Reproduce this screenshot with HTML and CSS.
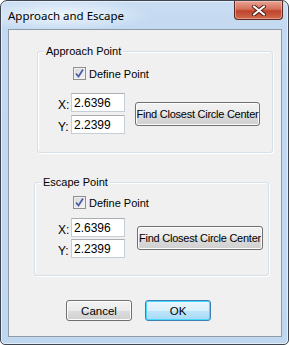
FILE: index.html
```html
<!DOCTYPE html>
<html lang="en">
<head>
    <meta charset="UTF-8">
    <title>Approach and Escape</title>
    <link rel="stylesheet" href="styles.css">
</head>
<body>
    <div class="window">
        <!-- Title bar -->
        <div class="titlebar">
            <span class="title">Approach and Escape</span>
            <div class="close">
                <svg width="16" height="11" viewBox="0 0 16 11">
                    <path d="M3 1.5 L13 9.5 M13 1.5 L3 9.5" stroke="#4a1a14" stroke-width="4" stroke-linecap="round"/>
                    <path d="M3 1.5 L13 9.5 M13 1.5 L3 9.5" stroke="#fff" stroke-width="2.2" stroke-linecap="round"/>
                </svg>
            </div>
        </div>

        <div class="client">
            <!-- Approach group -->
            <div class="group g1">
                <span class="legend">Approach Point</span>
                <label class="chk-row">
                    <span class="chk">
                        <svg width="9" height="9" viewBox="0 0 9 9"><path d="M1 4.5 L3.5 7.5 L8 0.5" fill="none" stroke="#4a5fa8" stroke-width="1.8"/></svg>
                    </span>
                    Define Point
                </label>
                <div class="coords">
                    <div class="fields">
                        <div class="fld"><span class="lbl">X:</span><span class="tb">2.6396</span></div>
                        <div class="fld"><span class="lbl">Y:</span><span class="tb">2.2399</span></div>
                    </div>
                    <button class="btn find">Find Closest Circle Center</button>
                </div>
            </div>

            <!-- Escape group -->
            <div class="group g2">
                <span class="legend">Escape Point</span>
                <label class="chk-row">
                    <span class="chk">
                        <svg width="9" height="9" viewBox="0 0 9 9"><path d="M1 4.5 L3.5 7.5 L8 0.5" fill="none" stroke="#4a5fa8" stroke-width="1.8"/></svg>
                    </span>
                    Define Point
                </label>
                <div class="coords">
                    <div class="fields">
                        <div class="fld"><span class="lbl">X:</span><span class="tb">2.6396</span></div>
                        <div class="fld"><span class="lbl">Y:</span><span class="tb">2.2399</span></div>
                    </div>
                    <button class="btn find">Find Closest Circle Center</button>
                </div>
            </div>

            <div class="actions">
                <button class="btn">Cancel</button>
                <button class="btn ok">OK</button>
            </div>
        </div>
    </div>
</body>
</html>
```

FILE: styles.css
```css
body {
    margin: 0;
    padding: 0;
    background-color: #fff;
    font-family: "Liberation Sans", Arial, sans-serif;
    font-size: 11px;
    color: #000;
}
.window {
    box-sizing: border-box;
    width: 289px;
    height: 345px;
    border: 1px solid #3f4650;
    border-radius: 7px 7px 5px 5px;
    background: linear-gradient(to bottom, #c9ddf2 0, #c3d9f1 30px, #c0d7f0 100%);
    box-shadow: inset 0 0 0 1px #e4eef9;
    padding: 0 6px 7px 7px;
    display: flex;
    flex-direction: column;
}
.titlebar {
    height: 28px;
    display: flex;
    align-items: flex-start;
    justify-content: space-between;
    background: radial-gradient(ellipse 90px 16px at 60px 14px, rgba(240, 247, 253, 0.95), rgba(240, 247, 253, 0) 100%);
    margin: 0 -6px 0 -7px;
    padding: 0 5px 0 7px;
}
.title {
    font-family: "Noto Sans", "Open Sans", sans-serif;
    font-size: 11.5px;
    line-height: 16px;
    margin-top: 7px;
    color: #000;
}
.close {
    width: 47px;
    height: 18px;
    border: 1px solid #5c2a22;
    border-top: none;
    border-radius: 0 0 4px 4px;
    background: linear-gradient(to bottom, #e8a493 0, #d5705b 45%, #c0432c 55%, #cf6a4d 100%);
    box-shadow: inset 0 0 0 1px rgba(255, 220, 210, 0.45);
    display: flex;
    align-items: center;
    justify-content: center;
}
.client {
    flex: 1;
    background-color: #f0f0f0;
    border: 1px solid #8e9aa7;
}
.group {
    border: 1px solid #d5dfe5;
    border-radius: 3px;
    box-shadow: inset 1px 1px 0 #fff, 1px 1px 0 #fff;
    display: flex;
    flex-direction: column;
}
.g1 {
    margin: 21px 0 0 28px;
    width: 234px;
    height: 100px;
    --inset: 35px;
    --gap: 10px;
}
.g2 {
    margin: 29px 0 0 25px;
    width: 233px;
    height: 92px;
    --inset: 38px;
    --gap: 12px;
}
.legend {
    align-self: flex-start;
    margin: -7px 0 0 6px;
    padding: 0 2px;
    line-height: 13px;
    background-color: #f0f0f0;
}
.chk-row {
    display: flex;
    align-items: center;
    gap: 3px;
    height: 13px;
    margin: 9px 0 0 var(--inset);
}
.g2 .chk-row {
    margin-top: 7px;
}
.chk {
    box-sizing: border-box;
    width: 13px;
    height: 13px;
    border: 1px solid #8f8f8f;
    background: linear-gradient(135deg, #d8d8d8, #f6f6f6);
    box-shadow: inset 0 0 0 1px #f0f0f0;
    display: flex;
    align-items: center;
    justify-content: center;
}
.coords {
    display: flex;
    align-items: center;
    gap: var(--gap);
    margin: 13px 0 0 calc(var(--inset) - 15px);
}
.g2 .coords {
    margin-top: 9px;
}
.fields {
    display: flex;
    flex-direction: column;
    gap: 3px;
}
.g2 .fields {
    gap: 2px;
}
.fld {
    display: flex;
    align-items: flex-end;
}
.lbl {
    width: 13px;
    line-height: 13px;
    font-size: 12px;
}
.tb {
    box-sizing: border-box;
    width: 54px;
    height: 19px;
    border: 1px solid #c5cdd6;
    border-top-color: #abadb3;
    background-color: #fff;
    padding: 2px 0 0 2px;
    font-size: 12px;
    line-height: 14px;
}
.btn {
    box-sizing: border-box;
    font-family: "Liberation Sans", Arial, sans-serif;
    font-size: 11px;
    color: #000;
    border: 1px solid #707070;
    border-radius: 3px;
    background: linear-gradient(to bottom, #f2f2f2 0, #ebebeb 50%, #dddddd 51%, #cfcfcf 100%);
    box-shadow: inset 0 0 0 1px #fcfcfc;
    padding: 0;
    margin: 0;
    white-space: nowrap;
}
.find {
    width: 125px;
    height: 24px;
    font-size: 11px;
    letter-spacing: -0.25px;
}
.g2 .find {
    width: 126px;
}
.actions {
    display: flex;
    gap: 13px;
    margin: 24px 0 0 57px;
}
.actions .btn {
    width: 66px;
    height: 21px;
    font-size: 11.5px;
}
.ok {
    border-color: #3c7fb1;
    background: linear-gradient(to bottom, #eaf6fd 0, #d9f0fc 50%, #bee6fd 51%, #a7d9f5 100%);
    box-shadow: inset 0 0 0 1px #48d9fe;
}
```
